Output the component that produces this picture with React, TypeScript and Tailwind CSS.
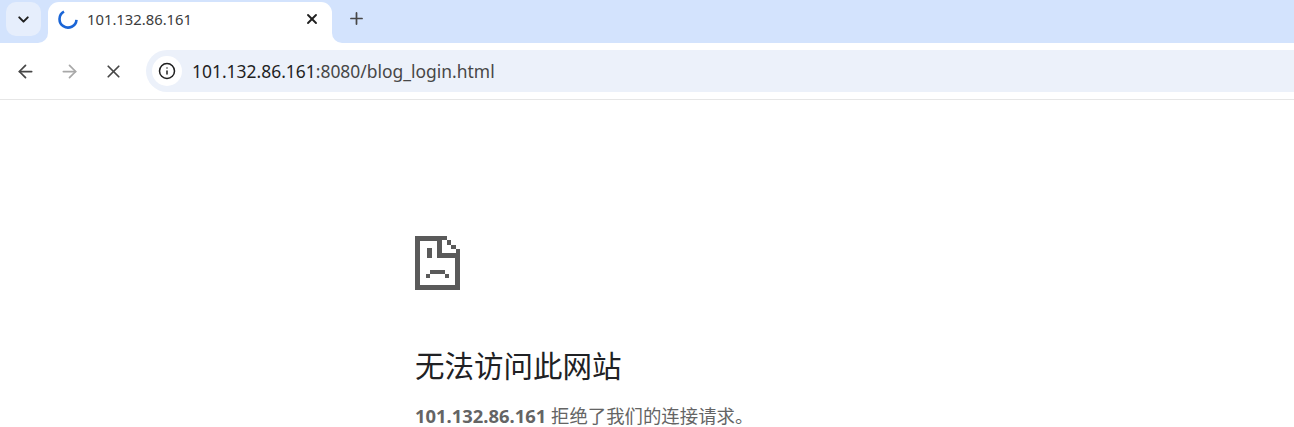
import { ArrowLeft, ArrowRight, ChevronDown, Info, Plus, X } from 'lucide-react';

const cjk = '"Noto Sans", "Noto Sans CJK SC", sans-serif';

function SadPage() {
  return (
    <svg width="45" height="54" viewBox="0 0 45 54" fill="#5a5a5a" shapeRendering="crispEdges">
      <path d="M0 0H27V17H45V54H0ZM5 5V49H40V22H22V5Z" fillRule="evenodd" />
      <rect x="27" y="0" width="5" height="4" />
      <rect x="32" y="4" width="4" height="5" />
      <rect x="36" y="9" width="5" height="4" />
      <rect x="41" y="13" width="4" height="4" />
      <rect x="12" y="12" width="5" height="10" />
      <rect x="15" y="34" width="15" height="4" />
      <rect x="11" y="38" width="4" height="4" />
      <rect x="30" y="38" width="4" height="4" />
    </svg>
  );
}

function Spinner() {
  return (
    <svg width="20" height="20" viewBox="0 0 20 20" fill="none">
      <path d="M6 2.6A8.5 8.5 0 1 0 18.5 10.8" stroke="#1a65d6" strokeWidth="2.6" />
    </svg>
  );
}

export default function App() {
  return (
    <div className="h-[427px] w-[1294px] overflow-hidden bg-white" style={{ fontFamily: cjk }}>
      {/* Tab strip */}
      <div className="flex h-[43px] items-end bg-[#d3e3fd]">
        <div className="ml-[6px] mb-[7px] flex h-[34px] w-[35px] items-center justify-center rounded-[10px] bg-[#e6eefc]">
          <ChevronDown size={17} strokeWidth={2.8} className="text-[#1f1f1f]" />
        </div>
        <div className="relative ml-[7px] flex h-[41px] w-[284px] items-center rounded-t-[11px] bg-white pb-[7px] pl-[10px] pr-[12px]">
          <span className="absolute bottom-0 left-[-10px] h-[10px] w-[10px] bg-white" />
          <span className="absolute bottom-0 left-[-10px] h-[10px] w-[10px] rounded-br-[10px] bg-[#d3e3fd]" />
          <span className="absolute bottom-0 right-[-10px] h-[10px] w-[10px] bg-white" />
          <span className="absolute bottom-0 right-[-10px] h-[10px] w-[10px] rounded-bl-[10px] bg-[#d3e3fd]" />
          <Spinner />
          <span className="ml-[9px] text-[14.8px] text-[#3c3c3c]">101.132.86.161</span>
          <X size={16} strokeWidth={2.8} className="ml-auto text-[#1f1f1f]" />
        </div>
        <Plus size={19} strokeWidth={2.2} className="ml-[15px] mb-[15px] text-[#474747]" />
      </div>

      {/* Toolbar */}
      <div className="flex h-[57px] items-center rounded-tl-[11px] border-b border-[#e6e6e6] bg-white">
        <ArrowLeft size={21} strokeWidth={2} className="ml-[15px] text-[#474747]" />
        <ArrowRight size={21} strokeWidth={2} className="ml-[23px] text-[#a8a8a8]" />
        <X size={21} strokeWidth={2} className="ml-[23px] text-[#474747]" />
        <div className="ml-[22px] flex h-[42px] flex-1 items-center rounded-l-[21px] bg-[#ecf1fa] pl-[6px]">
          <div className="flex h-[30px] w-[30px] items-center justify-center rounded-full bg-white">
            <Info size={18} strokeWidth={2} className="text-[#1f1f1f]" />
          </div>
          <span className="ml-[10px] text-[17.45px] text-[#474747]">
            <span className="text-[#1f1f1f]">101.132.86.161</span>:8080/blog_login.html
          </span>
        </div>
      </div>

      {/* Error page */}
      <div className="pl-[415px] pt-[136px]">
        <SadPage />
        <h1 className="mt-[56px] text-[29.5px] leading-[40px] font-normal text-[#202124]">无法访问此网站</h1>
        <p className="mt-[17px] text-[18.4px] leading-[26px] text-[#646464]">
          <strong className="font-bold">101.132.86.161</strong> 拒绝了我们的连接请求。
        </p>
      </div>
    </div>
  );
}
